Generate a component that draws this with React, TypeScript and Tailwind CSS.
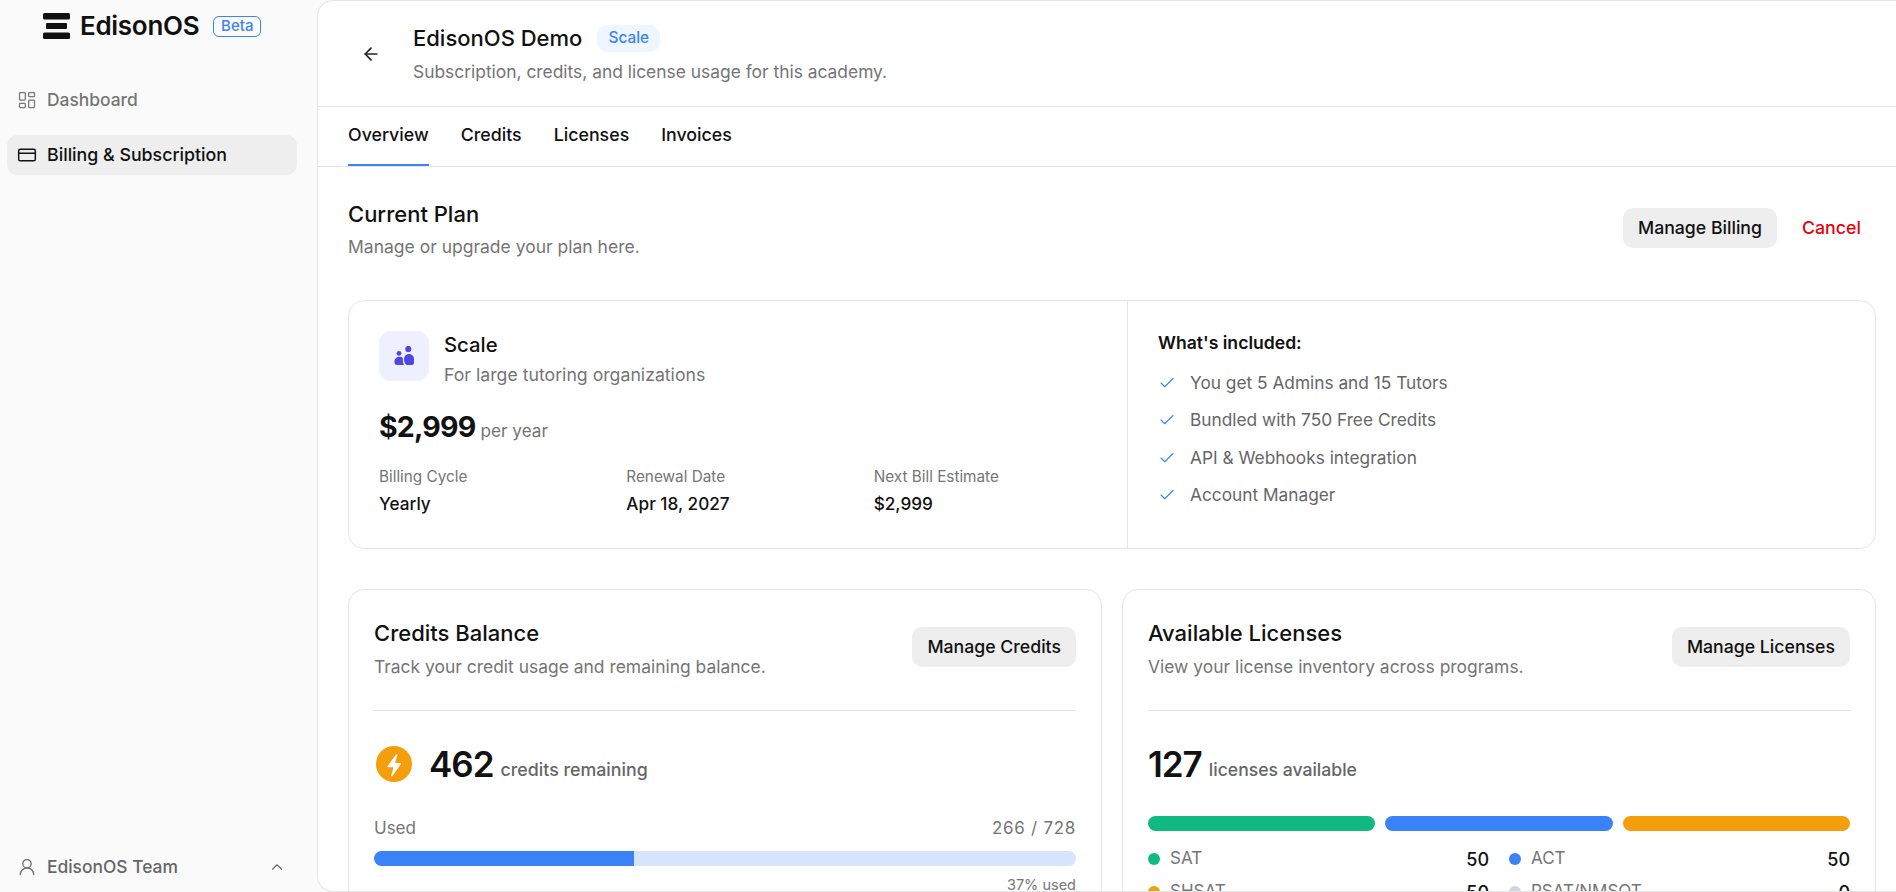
import { ArrowLeft, Check, ChevronUp, CreditCard, LayoutDashboard, UserRound } from "lucide-react";

const features = [
  "You get 5 Admins and 15 Tutors",
  "Bundled with 750 Free Credits",
  "API & Webhooks integration",
  "Account Manager",
];

const tabs = ["Overview", "Credits", "Licenses", "Invoices"];

const licenses = [
  { name: "SAT", count: 50, dot: "bg-[#10b981]" },
  { name: "ACT", count: 50, dot: "bg-[#3b82f6]" },
  { name: "SHSAT", count: 50, dot: "bg-[#f59e0b]" },
  { name: "PSAT/NMSQT", count: 0, dot: "bg-[#d1d5db]" },
];

function Logo() {
  return (
    <svg width="27" height="26" viewBox="0 0 27 26" fill="#111111">
      <rect x="0" y="0" width="27" height="6.5" rx="1.5" />
      <rect x="3" y="10" width="21" height="6" rx="1" />
      <rect x="0" y="19.5" width="27" height="6.5" rx="1.5" />
    </svg>
  );
}

function ScaleIcon() {
  return (
    <svg width="20" height="20" viewBox="0 0 20 20" fill="#4f46e5">
      <circle cx="14.3" cy="3" r="3.1" />
      <circle cx="5" cy="7.3" r="2.4" />
      <path d="M.4 16c0-3 2.2-5.2 5-5.2 1.4 0 2.6.5 3.5 1.4-.2 2.4.2 4.8 1.2 6.8H3.4C1.6 19 .4 17.8.4 16Z" />
      <path d="M10 13.5c0-3.2 1.9-5.5 5-5.5s5 2.3 5 5.5V17c0 1.1-.9 2-2 2h-5.5C11 18 10 16 10 13.5Z" />
    </svg>
  );
}

function BoltBadge() {
  return (
    <svg width="36" height="36" viewBox="0 0 36 36" className="shrink-0">
      <circle cx="18" cy="18" r="18" fill="#f59e0b" />
      <path
        fill="#ffffff"
        d="M20 8.5 11.6 20a.8.8 0 0 0 .6 1.3h5.3l-2.3 8.3c-.2.7.6 1.1 1 .6l8.6-12a.8.8 0 0 0-.6-1.3h-5.1l2.3-8c.2-.7-.9-1.1-1.5-.4Z"
      />
    </svg>
  );
}

function Sidebar() {
  return (
    <aside className="flex w-[317px] shrink-0 flex-col">
      <div className="flex h-[52px] items-center pl-[43px]">
        <Logo />
        <span className="ml-[10px] text-[26px] font-semibold leading-none tracking-[-0.3px] text-[#111111]">EdisonOS</span>
        <span className="ml-[14px] flex h-[21px] w-[48px] items-center justify-center rounded-[6px] border border-[#3b82f6] text-[15px] font-medium text-[#3b82f6]">
          Beta
        </span>
      </div>
      <nav className="mt-[28px] flex flex-col gap-[15px] pl-[7px] pr-[20px]">
        <div className="flex h-10 items-center gap-[10px] pl-[10px] text-[17.4px] font-medium text-[#757575]">
          <LayoutDashboard size={20} strokeWidth={1.5} />
          Dashboard
        </div>
        <div className="flex h-10 items-center gap-[10px] rounded-[10px] bg-[#eeeeee] pl-[10px] text-[17.8px] font-medium text-[#111111]">
          <CreditCard size={20} strokeWidth={1.75} />
          Billing &amp; Subscription
        </div>
      </nav>
      <div className="mt-auto mb-[5px] flex h-10 items-center pl-[17px] pr-[31px] text-[17.4px] font-medium text-[#666666]">
        <UserRound size={20} strokeWidth={1.5} />
        <span className="ml-[10px]">EdisonOS Team</span>
        <ChevronUp size={18} strokeWidth={1.5} className="ml-auto" />
      </div>
    </aside>
  );
}

function Header() {
  return (
    <header className="flex h-[106px] shrink-0 border-b border-[#e5e5e5]">
      <div className="ml-[43px] mt-[43px] h-[20px]">
        <ArrowLeft size={20} strokeWidth={2} className="text-[#222222]" />
      </div>
      <div className="ml-[32px] pt-[23px]">
        <div className="flex h-[28px] items-center gap-[15px]">
          <h1 className="text-[22px] font-medium text-[#111111]">EdisonOS Demo</h1>
          <span className="flex h-[27px] w-[63px] items-center justify-center rounded-[10px] bg-[#eff6ff] text-[15.4px] font-medium text-[#3b82f6]">
            Scale
          </span>
        </div>
        <p className="mt-[8px] text-[17.4px] leading-[24px] text-[#757575]">Subscription, credits, and license usage for this academy.</p>
      </div>
    </header>
  );
}

function Tabs() {
  return (
    <div className="flex h-[60px] shrink-0 gap-[32px] border-b border-[#e5e5e5] pl-[30px]">
      {tabs.map((tab, i) => (
        <div
          key={tab}
          className={`flex h-[59px] items-center border-b-2 text-[17.8px] font-medium text-[#111111] ${i === 0 ? "border-[#3b82f6]" : "border-transparent"}`}
        >
          {tab}
        </div>
      ))}
    </div>
  );
}

function Stat({ label, value }: { label: string; value: string }) {
  return (
    <div>
      <div className="text-[15.3px] leading-[20px] text-[#757575]">{label}</div>
      <div className="mt-[5px] text-[17.2px] font-medium leading-[24px] text-[#111111]">{value}</div>
    </div>
  );
}

function PlanCard() {
  return (
    <div className="mt-[41px] flex h-[249px] rounded-[16px] border border-[#e5e5e5]">
      <div className="w-[779px] shrink-0 border-r border-[#e5e5e5] px-[30px] pt-[30px]">
        <div className="flex gap-[15px]">
          <div className="flex h-[50px] w-[50px] items-center justify-center rounded-[12px] bg-[#eef0ff]">
            <ScaleIcon />
          </div>
          <div>
            <div className="text-[20.3px] font-medium leading-[28px] text-[#111111]">Scale</div>
            <div className="mt-[4px] text-[17.7px] leading-[24px] text-[#757575]">For large tutoring organizations</div>
          </div>
        </div>
        <div className="mt-[20px] flex items-baseline gap-[5px]">
          <span className="text-[28.5px] font-bold leading-[40px] tracking-[-0.8px] text-[#111111]">$2,999</span>
          <span className="text-[17.2px] text-[#757575]">per year</span>
        </div>
        <div className="mt-[20px] grid grid-cols-3 gap-6">
          <Stat label="Billing Cycle" value="Yearly" />
          <Stat label="Renewal Date" value="Apr 18, 2027" />
          <Stat label="Next Bill Estimate" value="$2,999" />
        </div>
      </div>
      <div className="pl-[30px] pt-[30px]">
        <div className="text-[17.6px] font-semibold leading-[24px] text-[#111111]">What's included:</div>
        <ul className="mt-[16px] flex flex-col gap-[13.3px]">
          {features.map((f) => (
            <li key={f} className="flex h-[24px] items-center gap-[14px] text-[17.3px] text-[#666666]">
              <Check size={18} strokeWidth={1.5} className="text-[#3b82f6]" />
              {f}
            </li>
          ))}
        </ul>
      </div>
    </div>
  );
}

function CardHead({ title, sub, action }: { title: string; sub: string; action: string }) {
  return (
    <div className="flex h-[121px] items-start justify-between border-b border-[#e5e5e5] pt-[28px]">
      <div>
        <h3 className="text-[22px] font-medium leading-[30px] text-[#111111]">{title}</h3>
        <p className="mt-[7px] text-[17.45px] leading-[24px] text-[#757575]">{sub}</p>
      </div>
      <button className="mt-[9px] flex h-10 items-center rounded-[10px] bg-[#eeeeee] px-[15px] text-[17.7px] font-medium text-[#111111]">
        {action}
      </button>
    </div>
  );
}

function CreditsCard() {
  return (
    <div className="min-w-0 flex-1 rounded-[16px] border border-[#e5e5e5] px-[25px]">
      <CardHead title="Credits Balance" sub="Track your credit usage and remaining balance." action="Manage Credits" />
      <div className="mt-[35px] flex h-[36px] items-center pl-[2px]">
        <BoltBadge />
        <span className="ml-[17px] text-[35px] font-semibold leading-none tracking-[-1px] text-[#111111]">462</span>
        <span className="ml-[7px] mt-[12px] text-[17.8px] font-medium text-[#666666]">credits remaining</span>
      </div>
      <div className="mt-[34px] flex justify-between text-[17px] leading-[24px] text-[#757575]">
        <span>Used</span>
        <span className="tracking-[0.7px]">266 / 728</span>
      </div>
      <div className="mt-[11px] h-[15px] overflow-hidden rounded-full bg-[#d6e4fd]">
        <div className="h-full bg-[#3b82f6]" style={{ width: "37%" }} />
      </div>
      <div className="mt-[9px] text-right text-[14.5px] leading-[20px] text-[#757575]">37% used</div>
    </div>
  );
}

function LicensesCard() {
  return (
    <div className="min-w-0 flex-1 rounded-[16px] border border-[#e5e5e5] px-[25px]">
      <CardHead title="Available Licenses" sub="View your license inventory across programs." action="Manage Licenses" />
      <div className="mt-[35px] flex h-[36px] items-center">
        <span className="text-[35px] font-semibold leading-none tracking-[-1px] text-[#111111]">127</span>
        <span className="ml-[7px] mt-[12px] text-[17.6px] font-medium text-[#666666]">licenses available</span>
      </div>
      <div className="mt-[34px] flex gap-[10px]">
        <div className="h-[15px] flex-1 rounded-full bg-[#10b981]" />
        <div className="h-[15px] flex-1 rounded-full bg-[#3b82f6]" />
        <div className="h-[15px] flex-1 rounded-full bg-[#f59e0b]" />
      </div>
      <div className="mt-[16px] grid grid-cols-2 gap-x-[20px] gap-y-[9px]">
        {licenses.map((l) => (
          <div key={l.name} className="flex h-[24px] items-center text-[17px]">
            <span className={`h-[12px] w-[12px] rounded-full ${l.dot}`} />
            <span className="ml-[10px] text-[#757575]">{l.name}</span>
            <span className="ml-auto text-[18px] font-medium text-[#111111]">{l.count}</span>
          </div>
        ))}
      </div>
    </div>
  );
}

export default function App() {
  return (
    <div className="flex h-[892px] overflow-hidden bg-[#fafafa] font-['Inter',sans-serif]">
      <Sidebar />
      <main className="flex h-[892px] min-w-0 flex-1 flex-col overflow-hidden rounded-l-[16px] border border-r-0 border-[#e5e5e5] bg-white">
        <Header />
        <Tabs />
        <div className="pl-[30px] pr-[20px] pt-[32px]">
          <div className="flex items-start justify-between">
            <div>
              <h2 className="text-[22px] font-medium leading-[30px] text-[#111111]">Current Plan</h2>
              <p className="mt-[6px] text-[17.5px] leading-[24px] text-[#757575]">Manage or upgrade your plan here.</p>
            </div>
            <div className="mt-[9px] flex items-center gap-[25px] pr-[15px]">
              <button className="flex h-10 items-center rounded-[10px] bg-[#eeeeee] px-[15px] text-[17.7px] font-medium text-[#111111]">
                Manage Billing
              </button>
              <button className="text-[17.8px] font-medium text-[#e7000b]">Cancel</button>
            </div>
          </div>
          <PlanCard />
          <div className="mt-[40px] flex gap-[20px]">
            <CreditsCard />
            <LicensesCard />
          </div>
        </div>
      </main>
    </div>
  );
}
